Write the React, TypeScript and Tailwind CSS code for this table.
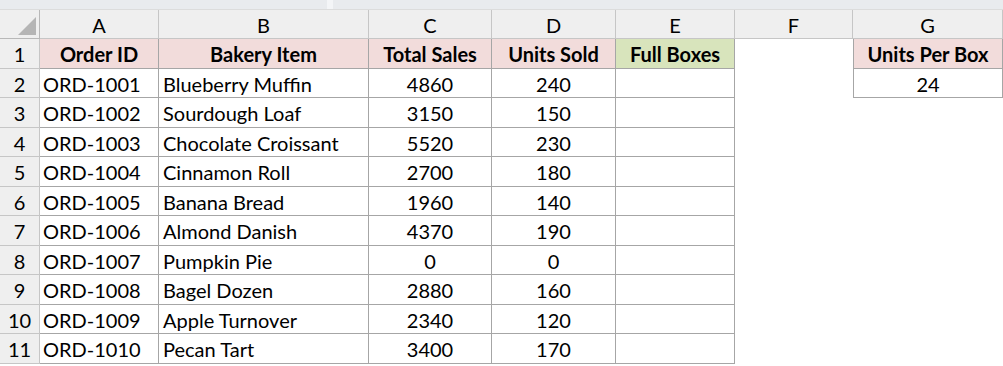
import React from 'react'

const rows = [
  ['ORD-1001', 'Blueberry Muffin', '4860', '240'],
  ['ORD-1002', 'Sourdough Loaf', '3150', '150'],
  ['ORD-1003', 'Chocolate Croissant', '5520', '230'],
  ['ORD-1004', 'Cinnamon Roll', '2700', '180'],
  ['ORD-1005', 'Banana Bread', '1960', '140'],
  ['ORD-1006', 'Almond Danish', '4370', '190'],
  ['ORD-1007', 'Pumpkin Pie', '0', '0'],
  ['ORD-1008', 'Bagel Dozen', '2880', '160'],
  ['ORD-1009', 'Apple Turnover', '2340', '120'],
  ['ORD-1010', 'Pecan Tart', '3400', '170'],
]

const letters = ['A', 'B', 'C', 'D', 'E', 'F', 'G']

const cell = 'h-[29.5px] flex items-center pt-[2px] border-r border-b border-[#a6a6a6] text-[20px] leading-none text-black'
const rowHead = 'h-[29.5px] flex items-center justify-center pt-[2px] bg-[#efefef] border-r border-b border-[#c6c6c6] text-[20px] leading-none text-black'

const App = () => {
  return (
    <main className="w-[1003px] h-[366px] overflow-hidden bg-white" style={{ fontFamily: 'Lato, "Open Sans", sans-serif' }}>
      <div className="h-[10px] flex bg-[#e9ebee] border-b border-[#dcdcdc]">
        <div className="w-[327px] h-full" />
        <div className="w-[6px] h-full bg-[#f4f5f7]" />
        <div className="flex-1 h-full" />
      </div>
      <div className="grid grid-cols-[40px_119px_210px_123px_124px_119px_118px_150px]">
        {/* column letters */}
        <div className="h-[29px] relative bg-[#efefef] border-r border-b border-[#b8b8b8]">
          <div
            className="absolute right-[3px] bottom-[3px] w-0 h-0"
            style={{ borderRight: '18px solid #b5b5b5', borderTop: '18px solid transparent' }}
          />
        </div>
        {letters.map((l) => (
          <div key={l} className="h-[29px] flex items-center justify-center pt-[2px] bg-[#efefef] border-r border-b border-[#c6c6c6] text-[20px] leading-none text-black">
            {l}
          </div>
        ))}

        {/* row 1 */}
        <div className={rowHead}>1</div>
        {['Order ID', 'Bakery Item', 'Total Sales', 'Units Sold'].map((h) => (
          <div key={h} className={`${cell} justify-center bg-[#f2dcdb] font-bold`}>{h}</div>
        ))}
        <div className={`${cell} justify-center bg-[#d8e4bc] font-bold`}>Full Boxes</div>
        <div className="h-[29.5px]" />
        <div className={`${cell} justify-center bg-[#f2dcdb] font-bold border-l`}>Units Per Box</div>

        {rows.map((r, i) => (
          <React.Fragment key={r[0]}>
            <div className={rowHead}>{i + 2}</div>
            <div className={`${cell} pl-[3px]`}>{r[0]}</div>
            <div className={`${cell} pl-[4px]`}>{r[1]}</div>
            <div className={`${cell} justify-center`}>{r[2]}</div>
            <div className={`${cell} justify-center`}>{r[3]}</div>
            <div className={cell} />
            <div className="h-[29.5px]" />
            {i === 0 ? (
              <div className={`${cell} justify-center border-l`}>24</div>
            ) : (
              <div className="h-[29.5px]" />
            )}
          </React.Fragment>
        ))}
      </div>
    </main>
  )
}

export default App
